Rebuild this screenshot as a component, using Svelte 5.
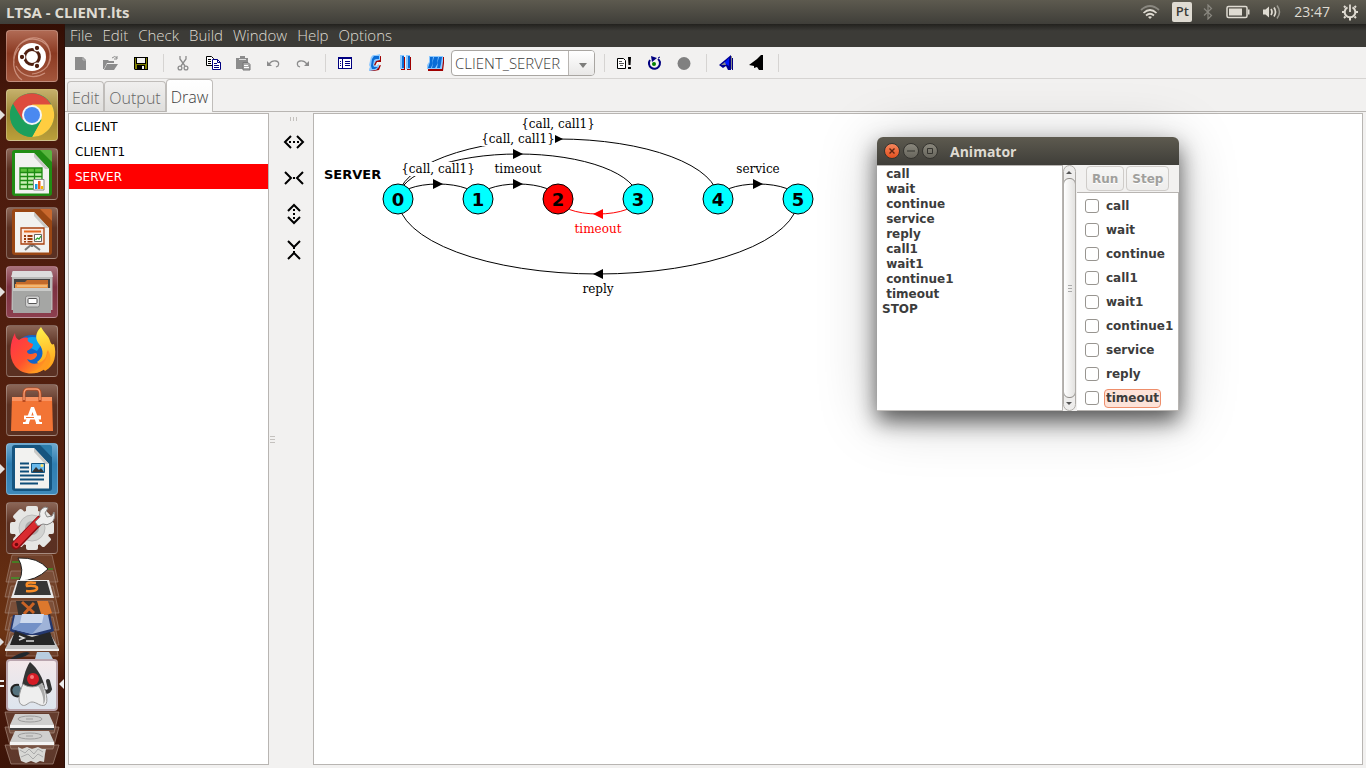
<script>
  const menus = ['File', 'Edit', 'Check', 'Build', 'Window', 'Help', 'Options'];
  const machines = ['CLIENT', 'CLIENT1', 'SERVER'];
  let selected = $state('SERVER');
  const actions = ['call', 'wait', 'continue', 'call1', 'wait1', 'continue1', 'service', 'reply', 'timeout'];
  const trace = ' call\n wait\n continue\n service\n reply\n call1\n wait1\n continue1\n timeout\nSTOP';

  const AXIS = 199;
  const nodes = [0, 1, 2, 3, 4, 5].map((n) => ({ n, x: 398 + n * 80, error: n === 2 }));
  const edges = [
    { from: 0, to: 1, label: '{call, call1}', w: 76 },
    { from: 0, to: 3, label: '{call, call1}', w: 76 },
    { from: 0, to: 4, label: '{call, call1}', w: 76 },
    { from: 1, to: 2, label: 'timeout', w: 50 },
    { from: 3, to: 2, label: 'timeout', w: 50, color: '#f00' },
    { from: 4, to: 5, label: 'service', w: 46 },
    { from: 5, to: 0, label: 'reply', w: 34 }
  ].map((e) => {
    const a = 398 + e.from * 80;
    const b = 398 + e.to * 80;
    const rx = Math.abs(b - a) / 2;
    const ry = rx * 3 / 8;
    const dir = b > a ? 1 : -1;
    const cx = (a + b) / 2;
    const apex = AXIS - dir * ry;
    return {
      ...e, cx, color: e.color ?? '#000',
      path: `M${a} ${AXIS}A${rx} ${ry} 0 0 1 ${b} ${AXIS}`,
      head: `M${cx - dir * 5} ${apex - 5}L${cx + dir * 5} ${apex}L${cx - dir * 5} ${apex + 5}Z`,
      base: dir > 0 ? apex - 11 : apex + 19
    };
  });
</script>

{#snippet tile(name, bg, art, running = false)}
  <button class="tile {bg}" aria-label={name}>
    {#if running}<i class="pip"></i>{/if}
    <svg width="50" height="50" viewBox="0 0 50 50" aria-hidden="true">{@render art()}</svg>
  </button>
{/snippet}

{#snippet dash()}
  <g fill="none" stroke="#e9b9a8" stroke-width="1.2" opacity=".6">
    <path d="M7 32C5 17 17 5 30 7s16 18 10 29M12 14C24 3 40 9 43 21s-6 21-18 22M15 49C5 42 4 27 12 17M38 42c-11 7-24 3-29-7" />
  </g>
  <circle cx="25" cy="26" r="14" fill="#fff" />
  <circle cx="25" cy="26" r="7.4" fill="none" stroke="#4e1f10" stroke-width="3" />
  <g stroke="#fff" stroke-width="1.3" fill="#4e1f10">
    <circle cx="15" cy="26" r="2.8" /><circle cx="30" cy="17" r="2.8" /><circle cx="30" cy="35" r="2.8" />
  </g>
{/snippet}

{#snippet chrome()}
  <circle cx="25" cy="25" r="22" fill="#1fa463" />
  <path d="M25 25L6 14A22 22 0 0 1 44 14.500Z" fill="#dd4b3e" />
  <path d="M25 14.500H44.500A22 22 0 0 1 25 47L34.500 30Z" fill="#ffcd40" />
  <path d="M6 14L15.500 30L25 14.500Z" fill="#dd4b3e" />
  <path d="M6 14L16 31.500a11 11 0 0 0 18-1L25 47A22 22 0 0 1 6 14Z" fill="#1c9f5c" />
  <circle cx="25" cy="25" r="10" fill="#f5f5f5" /><circle cx="25" cy="25" r="8" fill="#4a89f0" />
{/snippet}

{#snippet sheet(c1, c2)}
  <path d="M8 1H34L45 13V44a3 3 0 0 1-3 3H8a3 3 0 0 1-3-3V4a3 3 0 0 1 3-3Z" fill={c1} />
  <path d="M33 1H43a2 2 0 0 1 2 2V13Z" fill={c2} />
  <path d="M8 4H27L42 20V44.500H8Z" fill="#f2f2f0" />
  <path d="M27 4L42 20H38L27 8Z" fill="#c9c9c6" />
{/snippet}

{#snippet calc()}
  {@render sheet('#218d14', '#58b53e')}
  <path d="M13 19H35V40H13Z" fill="#c9efb4" />
  <path d="M13 19H35V23H13Z" fill="#5cc13c" />
  <path d="M13 19H35V40H13ZM13 23.500H35M13 27.500H35M13 31.500H35M13 35.500H35M20.500 19V40M27.500 19V40" fill="none" stroke="#1c8a12" stroke-width="1.3" />
  <path d="M26.500 30.500H37V41H26.500Z" fill="#fff" stroke="#888" />
  <path d="M28 35h2.500v5H28Z" fill="#199be0" /><path d="M31 32h2.500v8H31Z" fill="#f0601c" /><path d="M34 37h2.200v3H34Z" fill="#f5b800" />
{/snippet}

{#snippet impress()}
  {@render sheet('#9a4714', '#c9682d')}
  <path d="M25 36L18 42M25 36L33 42M25 35v4" stroke="#777" stroke-width="2" />
  <path d="M14 20H37V36H14Z" fill="#fbe9df" stroke="#a8410f" stroke-width="1.300" />
  <path d="M17 22.500H34V24.500H17Z" fill="#e3681f" />
  <path d="M17 27h2v2h-2zM17 30h2v2h-2zM17 33h2v1.500h-2zM20.500 27h5v2h-5zM20.500 30h5v2h-5zM20.500 33h5v1.500h-5z" fill="#983a0c" />
  <path d="M27.500 26.500H34.500V33.500H27.500Z" fill="#fff" stroke="#666" /><path d="M28.500 32L30.500 30L32 31L34 28" fill="none" stroke="#31a431" stroke-width="1.300" />
{/snippet}

{#snippet files()}
  <path d="M5 5Q5 4 7 4H43Q45 4 45.500 7V43H4.500Z" fill="#b9bab8" />
  <path d="M6 4H44L46 10H4Z" fill="#ddd" />
  <path d="M7 12H43V21H7Z" fill="#444" />
  <path d="M9 15h9l2-2h21v8H9Z" fill="#c36a2a" /><path d="M8 17h33v4H8Z" fill="#e79446" /><path d="M10 19H40" stroke="#fbd9a2" />
  <path d="M6 21H44V46H6Z" fill="#a5a6a4" /><path d="M6 21H44V24H6Z" fill="#c9cac8" />
  <rect x="18.500" y="29" width="14" height="11" rx="2" fill="#d2d2d1" stroke="#888" />
  <rect x="21" y="31.500" width="9" height="5" rx="1" fill="#fff" stroke="#555" />
{/snippet}

{#snippet firefox()}
  <defs>
    <linearGradient id="foxBody" x1="0" y1="0" x2="1" y2="1"><stop offset="0" stop-color="#ff2f4e" /><stop offset=".5" stop-color="#ff512e" /><stop offset="1" stop-color="#ffbd1c" /></linearGradient>
    <linearGradient id="foxTail" x1=".4" y1="0" x2=".5" y2="1"><stop offset="0" stop-color="#fff14b" /><stop offset="1" stop-color="#ff9a16" /></linearGradient>
  </defs>
  <circle cx="25" cy="27" r="18" fill="#1265cb" /><path d="M13 17A17 17 0 0 1 37 15L30 25Z" fill="#0aa3ee" />
  <path d="M34 1C28 7 28 13 32 18c5 6 5 14-2 18l8 9c10-5 12-17 9-27-2 1-3 0-4-3-1-5-6-8-9-14Z" fill="url(#foxTail)" />
  <path d="M8 7c0 4 2 6 4 7 3-2 5-3 9-2-1 3 0 4 5 6 0 4-3 5-6 7 0 3 3 4 8 2 2 0 3 2 1 4-3 4-7 3-9 2 2 5 8 6 14 3 5-3 6-7 6-12 4 8 3 15-3 19-8 7-22 6-29-3C1 31 3 16 8 7Z" fill="url(#foxBody)" />
  <path d="M41 24c4 7 3 14-2 18-6 5-13 6-18 4 9 0 18-6 20-22Z" fill="#ff9a21" />
{/snippet}

{#snippet software()}
  <path d="M5 12H45L46 46H4Z" fill="#f27435" /><path d="M5 12H45V16H5Z" fill="#f89362" />
  <path d="M17 17V9q0-5 4-5h8q4 0 4 5v8" fill="none" stroke="#b84b20" stroke-width="3" /><path d="M17 15V9q0-5 4-5h8q4 0 4 5v6" fill="none" stroke="#f6a078" stroke-width="1.300" />
  <path d="M24 22h3L33 38H29L25.500 27L22 38H18Z" fill="#fff" /><path d="M17 30.500H34V34.500H17Z" fill="#fff" /><path d="M19 32H27V33H19Z" fill="#f27435" /><path d="M16 37H22V39H16ZM29 37H35V39H29Z" fill="#fff" />
{/snippet}

{#snippet writer()}
  {@render sheet('#15547f', '#2b7cab')}
  <path d="M13 19.500h9M13 23.500h9M13 27.500h9M13 31.500h24M13 35.500h24M13 39.500h18" stroke="#0e4d78" stroke-width="1.800" />
  <path d="M24.500 19.500H37.500V28.500H24.500Z" fill="#69b8ea" stroke="#135480" /><path d="M25 28l4-5 3 3 2-2 3 4Z" fill="#333" /><circle cx="35" cy="21.500" r="1.500" fill="#ffe064" />
{/snippet}

{#snippet settings()}
  <g fill="#e6e6e4">
    {#each [0, 45, 90, 135] as a}<rect x="19" y="3" width="12" height="44" rx="2" transform="rotate({a} 25 25)" />{/each}
    <circle cx="25" cy="25" r="18" />
  </g>
  <circle cx="25" cy="25" r="13" fill="#d2d3d1" stroke="#bbb" /><circle cx="25" cy="25" r="7" fill="#aaa" />
  <path d="M33 17L9 42" stroke="#8d0c11" stroke-width="9" stroke-linecap="round" /><path d="M32 17.500L9 41.500" stroke="#d92b30" stroke-width="6.500" stroke-linecap="round" />
  <circle cx="9.500" cy="41.500" r="1.800" fill="#6d0a0c" />
  <path d="M28 19L33 14Q31 7 38 4l3 1-3 5 2 4 5-1 2-4q2 7-3 11-4 3-8 1L31 23Z" fill="#eee" stroke="#888" stroke-width="1" />
{/snippet}

{#snippet duke()}
  <path d="M12 25c-6-1-9 3-7 8s10 4 12 0" fill="#55727e" stroke="#222" stroke-width="2" />
  <path d="M36 30q5 4 7-1l-2-8" fill="none" stroke="#333" stroke-width="4" stroke-linecap="round" />
  <path d="M23 2C18 9 16 20 14 31L38 28C36 18 31 9 23 2Z" fill="#333" />
  <path d="M16 24C12 33 10 43 15 45c4 2 6-3 10-3 5 0 8 5 13 3 4-3 1-14-3-22-5 5-14 5-19 1Z" fill="#eee" stroke="#999" />
  <path d="M31 26c5 7 6 14 5 18 4-2 2-12-1-20Z" fill="#aaa" />
  <circle cx="26" cy="19" r="6" fill="#d51b25" /><circle cx="25" cy="17" r="2" fill="#f47a7a" />
{/snippet}

{#snippet tool(name, art)}
  <button class="tool" aria-label={name}>
    <svg width="18" height="18" viewBox="0 0 18 18" aria-hidden="true">{@render art()}</svg>
  </button>
{/snippet}

{#snippet iNew()}<path d="M3 3H11L14 6V16H3Z" fill="#8c8c8c" /><path d="M11 3V6H14" fill="none" stroke="#bbb" />{/snippet}
{#snippet iOpen()}<path d="M1 6H6L7 7H12V9H5L2 15H1Z" fill="#8c8c8c" /><path d="M5 10H16L12 16H2Z" fill="#8c8c8c" /><path d="M10 4Q13 1 15 4M15 2V5H12" fill="none" stroke="#8c8c8c" />{/snippet}
{#snippet iSave()}<path d="M2 3H16V16H3L2 15Z" fill="#000" /><path d="M3 4H4V10H14V4H15V15H3Z" fill="#808000" /><path d="M5 4H13V9H5Z" fill="#f2f1f0" /><path d="M5 11H13V15H5Z" fill="#000" /><path d="M10 12H12V15H10Z" fill="#f2f1f0" />{/snippet}
{#snippet iCut()}<g fill="none" stroke="#8c8c8c" stroke-width="1.300"><path d="M6 2V5L11 12M12 2V5L7 12" /><circle cx="6" cy="14" r="1.900" /><circle cx="12" cy="14" r="1.900" /></g>{/snippet}
{#snippet iCopy()}<path d="M2.500 2.500H7.500L9.500 4.500V11.500H2.500Z" fill="#fff" stroke="#000" /><path d="M4 5.500h3M4 7.500h3M4 9.500h3" stroke="#000" /><path d="M8.500 5.500H13.500L16.500 8.500V15.500H8.500Z" fill="#fff" stroke="#000080" /><path d="M13.500 5.500V8.500H16.500M10 9.500h3M10 11.500h5M10 13.500h5" fill="none" stroke="#000080" />{/snippet}
{#snippet iPaste()}<path d="M2 4H6V2H11V4H14V8H9V15H2Z" fill="#8c8c8c" /><path d="M5 5.500H12" stroke="#ddd" /><path d="M9 8.500H14L16 10.500V16H9Z" fill="#aaa" stroke="#777" /><path d="M10 11.500h4M10 13.500h5" stroke="#fff" />{/snippet}
{#snippet iUndo()}<path d="M3 7V12H8Z" fill="#8c8c8c" /><path d="M5 10Q8 6 12 7T14 12L12 13" fill="none" stroke="#8c8c8c" stroke-width="1.300" />{/snippet}
{#snippet iRedo()}<path d="M15 7V12H10Z" fill="#8c8c8c" /><path d="M13 10Q10 6 6 7T4 12L6 13" fill="none" stroke="#8c8c8c" stroke-width="1.300" />{/snippet}
{#snippet iList()}<path d="M2 3H16V15H2Z" fill="#000080" /><path d="M3 5H6V14H3ZM7 5H15V14H7Z" fill="#fff" /><path d="M4 7.500h1M4 9.500h1M4 11.500h1M9 7.500h5M9 9.500h5M9 11.500h5" stroke="#000080" />{/snippet}
{#snippet iCompile()}
  <path d="M15 2V8H11L9 12H12L15 11L13 16L8 17H3L6 15L4 10L9 3Z" fill="#a00000" />
  <path d="M7 1H10L14 0V6L10 7L8 11L10 12L13 10V13L10 16L3 17V15L4 13L3 11L5 3Z" fill="#8cc8ff" />
  <path d="M8 2H13V5H10L8 6L7 11L8 13H12L9 15H6L5 12L6 5Z" fill="#0a6cd6" />
{/snippet}
{#snippet iCompose()}<path d="M7 3H9V16H5V15H7ZM13 3H15V16H11V15H13Z" fill="#a00000" /><path d="M4 1H8V15H4ZM10 1H14V15H10Z" fill="#8cc8ff" /><path d="M6 2H8V14H6ZM12 2H14V14H12Z" fill="#0a6cd6" />{/snippet}
{#snippet iMinimise()}
  <path d="M4 3H18V9L17 17H2V15H13Z" fill="#a00000" />
  <path d="M3 2H17V7L16 15H1V11L3 8Z" fill="#8cc8ff" />
  <path d="M4 3H7L6 10L8 3H12L11 10L13 3H16L15 10L14 14H11L12 9L9 14H6L7 9L5 14H2L4 8Z" fill="#0a6cd6" />
{/snippet}
{#snippet iCheck()}<path d="M2.500 4.500H8.500L10.500 6.500V14.500H2.500Z" fill="#fff" stroke="#000" /><path d="M4 7.500h3M4 9.500h5M5 11.500h3" stroke="#555" /><path d="M13 3H16L15.500 11H13.500ZM13 13H16V15H13Z" fill="#000" />{/snippet}
{#snippet iAnim()}<path d="M13 5A5.500 5.500 0 1 1 5 6" fill="none" stroke="#000080" stroke-width="2" /><path d="M6 2L12 4L7 8Z" fill="#000080" /><path d="M13 4l2-1M15 8h1" stroke="#000080" /><circle cx="9" cy="10" r="2" fill="#008000" />{/snippet}
{#snippet iStop()}<circle cx="9" cy="9.500" r="6.500" fill="#808080" />{/snippet}
{#snippet iBlueA()}<path d="M2 11L14 1V16H11L9 12L6 14Z" fill="#000090" /><path d="M7 9L12 4V12Z" fill="#0018ff" /><path d="M4 11L8 8L9 11ZM14 2h1v13h-1Z" fill="#888" /><path d="M15.500 4V16" stroke="#000080" />{/snippet}
{#snippet iBlackA()}<path d="M2 11L10 5L14 1H16V16H12L10 13L7 14V12Z" fill="#000" />{/snippet}

{#snippet chevrons(name, d, dots)}
  <button class="stretch" aria-label={name}>
    <svg width="22" height="22" viewBox="0 0 22 22" aria-hidden="true">
      <path {d} fill="none" stroke="#000" stroke-width="2" /><path d={dots} stroke="#000" stroke-width="2" />
    </svg>
  </button>
{/snippet}

<div class="desktop">
  <header class="panel">
    <h1>LTSA - CLIENT.lts</h1>
    <div class="tray">
      <svg class="wifi" width="20" height="16" viewBox="0 0 20 16" aria-label="Wi-Fi" fill="none" stroke-width="1.700">
        <path d="M1 6Q10-2 19 6" stroke="#8a8880" /><path d="M3.500 9Q10 3 16.500 9M6 11.500Q10 8 14 11.500" stroke="#dfdbd2" /><path d="M8 13L10 15L12 13Q10 11.500 8 13Z" fill="#dfdbd2" />
      </svg>
      <span class="kbd">Pt</span>
      <svg class="bt" width="10" height="16" viewBox="0 0 10 16" aria-label="Bluetooth"><path d="M1 4.500L8.500 11.500L5 15V1L8.500 4.500L1 11.500" fill="none" stroke="#8a8880" stroke-width="1.200" /></svg>
      <svg class="bat" width="24" height="14" viewBox="0 0 24 14" aria-label="Battery"><rect x="1" y="1.500" width="20" height="11" rx="1.500" fill="none" stroke="#dfdbd2" stroke-width="1.500" /><path d="M3 3.500H16V10.500H3Z" fill="#dfdbd2" /><path d="M22 4.500V9.500H23.500V4.500Z" fill="#dfdbd2" /></svg>
      <svg class="snd" width="20" height="16" viewBox="0 0 20 16" aria-label="Sound"><path d="M1 5.500H3.500L7 2.500V13.500L3.500 10.500H1Z" fill="#dfdbd2" /><path d="M9 5Q11 8 9 11M12 3.500Q15 8 12 12.500" fill="none" stroke="#dfdbd2" stroke-width="1.700" /><path d="M15 1.500Q20 8 15 14.500" fill="none" stroke="#9a988f" stroke-width="1.500" /></svg>
      <time>23:47</time>
      <svg width="18" height="18" viewBox="0 0 18 18" aria-label="Session"><g fill="none" stroke="#dfdbd2"><path d="M6.500 4.300A5.300 5.300 0 1 0 11.500 4.300" stroke-width="2" /><path d="M9 1.500V9" stroke-width="1.800" /><path d="M4.500 4.500L3 3M13.500 4.500L15 3M3.500 9H1M14.500 9H17M4.500 13.500L3 15M13.500 13.500L15 15M9 15V17.500" stroke-width="2" /></g></svg>
    </div>
  </header>

  <nav class="launcher" aria-label="Launcher">
    <div class="tiles">
      {@render tile('Dash', 'rust', dash)}
      {@render tile('Chrome', 'olive', chrome, true)}
      {@render tile('Calc', 'smoke', calc)}
      {@render tile('Impress', 'smoke', impress)}
      {@render tile('Files', 'wine', files, true)}
      {@render tile('Firefox', 'smoke', firefox)}
      {@render tile('Software', 'smoke', software)}
      {@render tile('Writer', 'blue', writer, true)}
      {@render tile('Settings', 'smoke', settings)}
    </div>
    <svg class="fold" width="64" height="105" viewBox="0 0 64 105" aria-hidden="true">
      <g fill="#8d6655" fill-opacity=".35" stroke="#a98a7b" stroke-opacity=".6">
        <path d="M12 1H52L58 28H6Z" /><path d="M11 17H53L59 43H5Z" /><path d="M11 32H53L59 59H5Z" /><path d="M11 47H53L59 76H5Z" /><path d="M11 63H53L59 91H5Z" /><path d="M10 78H54L58 102H6Z" />
      </g>
      <path d="M12 8h10M11 24h10M46 15h7" stroke="#20b820" /><path d="M18 4Q38 3 48 15Q36 27 19 27Q25 16 18 4Z" fill="#fff" stroke="#222" />
      <path d="M17 26H49L54 44H11Z" fill="#e9e9e9" /><path d="M18 27H47L51 41H14Z" fill="#363636" /><path d="M36 29Q25 27 27 32Q38 31 37 35Q35 38 26 37" fill="none" stroke="#f68b27" stroke-width="2.500" />
      <path d="M16 47H48L51 65H19Z" fill="#363230" /><path d="M37 47H48L52 59L42 63Z" fill="#dd782d" /><path d="M22 48L34 59M34 49L24 60" stroke="#ca6325" stroke-width="3" />
      <path d="M13 61H50L54 77L32 86L10 77Z" fill="#24386f" /><path d="M15 61H48L51 75L32 80L12 75Z" fill="#9fb3d8" /><path d="M22 60H44L42 69H20Z" fill="#cfdbee" /><path d="M20 69H42L32 80L12 75Z" fill="#7391c7" />
      <path d="M13 81H51L59 95H5Z" fill="#c5c5c5" /><path d="M15 77L32 83L50 78L55 91H10Z" fill="#262626" /><path d="M19 82l5 2-5 2M26 87h8" fill="none" stroke="#ddd" stroke-width="1.500" /><path d="M5 95H59V97H5Z" fill="#eee" />
      <path d="M0 84L4 88L0 92Z" fill="#ddd" />
      <path d="M27 98Q20 98 10 105Q23 105 30 99Z" fill="#20272c" /><path d="M37 98H49L53 105H35Z" fill="#b8cde0" />
    </svg>
    <div class="current">
      <button class="tile pale" aria-label="LTSA">
        <svg width="50" height="50" viewBox="0 0 50 50" aria-hidden="true">{@render duke()}</svg>
      </button>
      <svg class="marks" width="64" height="12" viewBox="0 0 64 12" aria-hidden="true"><path d="M0 3H4M0 8H4" stroke="#eee" stroke-width="2" /><path d="M64 1L59 6L64 11Z" fill="#eee" /></svg>
    </div>
    <svg class="fold" width="64" height="54" viewBox="0 0 64 54" aria-hidden="true">
      <g fill="#ac8d7d" fill-opacity=".3" stroke="#b59b8d" stroke-opacity=".6"><path d="M5 1H59L54 22H10Z" /><path d="M5 16H59L53 38H11Z" /><path d="M5 34H59L53 53H11Z" /></g>
      <g fill="#cfcfce"><path d="M15 3H49L54 14H10Z" /><path d="M15 20H49L54 31H10Z" /></g>
      <path d="M10 14H54V17H10ZM10 31H54V34H10Z" fill="#f4f4f4" /><path d="M10 17H54V19H10Z" fill="#444" />
      <g fill="none" stroke="#9d9d9d"><ellipse cx="30" cy="8" rx="12" ry="3" /><ellipse cx="30" cy="25" rx="12" ry="3" /><path d="M26 8h7M26 25h7" /></g>
      <path d="M18 36l4 2 5-2 5 2 6-2 4 2 4 0-1 5-1 8-4-1-4 2-5-2-5 2-5-2-2-7Z" fill="#d8d8d5" /><path d="M20 39l5 3 4-4 5 5 4-5 5 3M21 46l7-3 5 5 5-5 5 3" fill="none" stroke="#aaa" />
    </svg>
  </nav>

  <main class="app">
    <nav class="menubar" aria-label="Menu">
      {#each menus as m}<button>{m}</button>{/each}
    </nav>
    <div class="toolbar" role="toolbar" aria-label="Tools">
      {@render tool('New', iNew)}{@render tool('Open', iOpen)}{@render tool('Save', iSave)}
      <span class="sep"></span>
      {@render tool('Cut', iCut)}{@render tool('Copy', iCopy)}{@render tool('Paste', iPaste)}{@render tool('Undo', iUndo)}{@render tool('Redo', iRedo)}
      <span class="sep"></span>
      {@render tool('Parse', iList)}{@render tool('Compile', iCompile)}{@render tool('Compose', iCompose)}{@render tool('Minimise', iMinimise)}
      <div class="combo">
        <select aria-label="Target"><option>CLIENT_SERVER</option></select>
        <svg width="25" height="22" viewBox="0 0 25 22" aria-hidden="true"><path d="M10 11H18L14 16Z" fill="#7d7d7b" /></svg>
      </div>
      <span class="sep"></span>
      {@render tool('Check safety', iCheck)}{@render tool('Animate', iAnim)}{@render tool('Stop', iStop)}
      <span class="sep"></span>
      {@render tool('Blue alphabet', iBlueA)}{@render tool('Black alphabet', iBlackA)}
      <span class="sep"></span>
    </div>
    <div class="tabs" role="tablist">
      <button role="tab" aria-selected="false">Edit</button>
      <button role="tab" aria-selected="false">Output</button>
      <button role="tab" aria-selected="true" class="on">Draw</button>
    </div>
    <section class="work">
      <ul class="machines">
        {#each machines as m}
          <li><button class:on={selected === m} onclick={() => (selected = m)}>{m}</button></li>
        {/each}
      </ul>
      <div class="sash"><i></i></div>
      <div class="side">
        <span class="grip"></span>
        {@render chevrons('Stretch horizontally', 'M8 5L2 11L8 17M14 5L20 11L14 17', 'M6 11h2M10 11h2M14 11h2')}
        {@render chevrons('Shrink horizontally', 'M2 5L8 11L2 17M20 5L14 11L20 17', 'M10 11h2')}
        {@render chevrons('Stretch vertically', 'M5 8L11 2L17 8M5 14L11 20L17 14', 'M11 6v2M11 10v2M11 14v2')}
        {@render chevrons('Shrink vertically', 'M5 2L11 8L17 2M5 20L11 14L17 20', 'M11 8v2M11 12v2')}
      </div>
      <div class="canvas">
        <svg width="520" height="200" viewBox="314 114 520 200" role="img" aria-label="SERVER">
          {#each edges as e}
            <path d={e.path} fill="none" stroke={e.color} />
            <path d={e.head} fill={e.color} />
          {/each}
          {#each edges as e}
            <rect x={e.cx - e.w / 2} y={e.base - 11} width={e.w - 1} height="14" fill="#fff" />
            <text class="label" x={e.cx} y={e.base} fill={e.color}>{e.label}</text>
          {/each}
          {#each nodes as n}
            <circle cx={n.x} cy={AXIS} r="15" fill={n.error ? '#f00' : '#0ff'} stroke="#000" />
            <text class="num" x={n.x} y={AXIS + 7}>{n.n}</text>
          {/each}
          <text class="name" x="324" y="179">SERVER</text>
        </svg>
      </div>
    </section>
  </main>

  <section class="window" aria-label="Animator">
    <header>
      <button class="wb close" aria-label="Close"><svg width="8" height="8" viewBox="0 0 8 8"><path d="M1.500 1.500L6.500 6.500M6.500 1.500L1.500 6.500" stroke="#5b2412" stroke-width="1.400" /></svg></button>
      <button class="wb" aria-label="Minimise"><svg width="8" height="8" viewBox="0 0 8 8"><path d="M0 4H8" stroke="#35342f" /></svg></button>
      <button class="wb" aria-label="Maximise"><svg width="8" height="8" viewBox="0 0 8 8"><path d="M1.500 1.500H6.500V6.500H1.500Z" fill="none" stroke="#35342f" /></svg></button>
      <h2>Animator</h2>
    </header>
    <div class="content">
      <textarea readonly aria-label="Trace" value={trace}></textarea>
      <div class="scroll">
        <svg width="12" height="12" viewBox="0 0 12 12" aria-hidden="true"><path d="M3 8H9L6 5Z" fill="#555" /></svg>
        <div class="thumb"><i></i></div>
        <svg width="12" height="12" viewBox="0 0 12 12" aria-hidden="true"><path d="M3 4H9L6 7Z" fill="#555" /></svg>
      </div>
      <div class="controls">
        <div class="runbar"><button disabled>Run</button><button disabled>Step</button></div>
        <div class="checks">
          {#each actions as a}
            <label class:focus={a === 'timeout'}><input type="checkbox" /><span>{a}</span></label>
          {/each}
        </div>
      </div>
    </div>
  </section>
</div>

<style>
  :global(body) { overflow: hidden; }
  .desktop {
    position: relative;
    display: grid;
    grid-template: 24px minmax(0, 1fr) / 65px minmax(0, 1fr);
    height: 100vh;
    background: #f2f1f0;
    color: #3c3c3c;
    font-family: "Open Sans", "Noto Sans", sans-serif;
  }
  button { font: inherit; color: inherit; border: 0; padding: 0; margin: 0; background: none; }
  h1, h2 { margin: 0; font-size: 15px; font-weight: 700; color: #dfdbd2; }
  svg { display: block; }

  .panel {
    grid-column: 1 / -1;
    display: flex;
    justify-content: space-between;
    align-items: center;
    padding: 0 7px 0 6px;
    background: linear-gradient(#5d5a4f, #3f3e39);
    line-height: 24px;
  }
  .tray { display: flex; align-items: center; color: #dfdbd2; font-size: 15px; }
  .kbd {
    width: 20px; height: 20px; margin: 0 11px 0 12px;
    border-radius: 2px; background: #dfdbd2; color: #3c3b37;
    font-size: 13px; font-weight: 600; line-height: 19px; text-align: center;
  }
  .bat { margin: 0 12px 0 13px; }
  time { margin: 0 11px 0 12px; font-size: 14px; }

  .launcher {
    box-sizing: border-box;
    overflow: hidden;
    padding-top: 6px;
    border-right: 1px solid #2c1009;
    background: linear-gradient(#330e04, #4b1a0d 12%, #54210f 60%, #6b3313 82%, #4c1b0c 88%, #3c1408);
  }
  .tiles { display: flex; flex-direction: column; gap: 7px; padding-left: 6px; }
  .tile {
    position: relative;
    box-sizing: border-box;
    width: 52px; height: 52px;
    border: 1px solid rgba(255, 255, 255, .25);
    border-radius: 4px;
  }
  .rust { background: linear-gradient(#b06a54, #8b3a22 45%, #a3563c); }
  .olive { background: linear-gradient(#c5b06b, #9c8330 50%, #bba03a); }
  .smoke { background: linear-gradient(#8b6657, #5c3122 40%, #5a3022); }
  .wine { background: linear-gradient(#a8717a, #7c3040 40%, #8c3f4e); }
  .blue { background: linear-gradient(#6ea9cf, #2e7db1 40%, #3e89ba); }
  .pale { background: linear-gradient(#f3e8ea, #dde5ee); border: 2px solid #b9a5ae; }
  .pale svg { margin: -1px; }
  .pip {
    position: absolute; left: -7px; top: 20px;
    border: 5px solid transparent; border-left-color: #e4e0dd; border-right: 0;
  }
  .current { position: relative; padding-left: 6px; height: 52px; }
  .marks { position: absolute; left: 0; top: 19px; }

  .app { display: flex; flex-direction: column; min-width: 0; font-weight: 300; }
  .menubar {
    display: flex; gap: 10px; height: 23px; padding-left: 5px;
    background: linear-gradient(#22211e, #3c3b37 7px);
    color: #dfdbd2; font-size: 15px;
  }
  .menubar button { height: 21px; line-height: 20px; }
  .toolbar {
    display: flex; align-items: center; height: 31px; padding-left: 1px;
    border-bottom: 1px solid #d6d4d2;
  }
  .tool { display: grid; place-items: center; width: 30px; height: 30px; }
  .sep { width: 1px; height: 18px; margin: 0 4px 0 7px; background: #d6d4d2; }
  .combo {
    display: flex; box-sizing: border-box; width: 144px; height: 26px; margin: 0 2px 0 1px;
    border: 1px solid #a9a6a2; border-radius: 4px; background: #fff;
  }
  .combo select {
    flex: 1; min-width: 0; padding: 0 0 0 3px; border: 0; appearance: none;
    background: none; color: #3c3c3c; font: 300 15px "Open Sans", sans-serif;
  }
  .combo svg { height: 24px; border-left: 1px solid #b8b5b2; border-radius: 0 3px 3px 0; background: linear-gradient(#fff, #e9e8e7); }

  .tabs { display: flex; align-items: flex-end; height: 32px; padding-left: 2px; border-bottom: 1px solid #b8b5b2; font-size: 16px; }
  .tabs button {
    box-sizing: border-box; height: 30px; padding: 3px 4px 0;
    border: 1px solid #c0bdba; border-bottom: 0; border-radius: 4px 4px 0 0;
    background: linear-gradient(#f0efee, #dfdedc); color: #666;
  }
  .tabs .on { height: 33px; margin-bottom: -1px; padding: 2px 4px 0; background: linear-gradient(#fff, #f8f8f7); color: #3c3c3c; }

  .work { display: flex; flex: 1; min-height: 0; margin: 1px 3px 3px; }
  .machines {
    box-sizing: border-box; width: 201px; margin: 0; padding: 0; list-style: none;
    border: 1px solid #b8b5b2; background: #fff;
  }
  .machines button {
    display: block; width: 100%; height: 25px; padding-left: 6px;
    color: #000; font: 12px "DejaVu Sans", sans-serif; text-align: left;
  }
  .machines .on { background: #f00; color: #fff; }
  .sash { display: flex; align-items: center; width: 6px; }
  .sash i { width: 5px; height: 7px; margin-left: 1px; background: repeating-linear-gradient(#c4c1be 0 1px, transparent 1px 3px); }
  .side { display: flex; flex-direction: column; align-items: center; gap: 14px; width: 38px; }
  .grip { width: 8px; height: 4px; margin: 4px 0 -4px; background: repeating-linear-gradient(90deg, #c4c1be 0 1px, transparent 1px 3px); }
  .canvas { flex: 1; min-width: 0; border: 1px solid #b8b5b2; background: #fff; overflow: hidden; }
  .label { font: 12px "DejaVu Serif", serif; text-anchor: middle; }
  .num { font: 700 18px "DejaVu Sans", sans-serif; text-anchor: middle; }
  .name { font: 700 13px "DejaVu Sans", sans-serif; }

  .window {
    position: absolute; left: 877px; top: 137px; width: 302px;
    display: flex; flex-direction: column;
    border-radius: 6px 6px 0 0; background: #f2f1f0;
    box-shadow: 0 10px 22px rgba(0, 0, 0, .62), 0 6px 60px rgba(0, 0, 0, .22);
    font: 700 12px "DejaVu Sans", sans-serif;
  }
  .window header {
    display: flex; align-items: center; gap: 3px; height: 28px; padding-left: 7px;
    border-radius: 6px 6px 0 0; background: linear-gradient(#5d5a4f, #3f3e39);
  }
  .window h2 { margin-left: 9px; font: 700 14px "Open Sans", sans-serif; }
  .wb {
    display: grid; place-items: center; box-sizing: border-box; width: 16px; height: 16px;
    border: 1px solid #35342f; border-radius: 50%; background: linear-gradient(#8a877c, #67655c);
  }
  .close { background: linear-gradient(#f5865c, #e2501f); }
  .content { display: flex; }
  textarea {
    box-sizing: border-box; width: 186px; padding: 1px 5px; resize: none; outline: 0; overflow: hidden;
    border: 1px solid #c4c1be; border-top-color: #b8b5b2; border-left: 0; border-right-color: #b8b5b2; background: #fff; color: #3c3c3c;
    font: inherit; line-height: 15px; white-space: pre;
  }
  .scroll {
    display: flex; flex-direction: column; box-sizing: border-box; width: 13px; margin: 0 1px 0 0;
    border: 1px solid #b0ada9; border-radius: 7px; background: #eeedec; overflow: hidden;
  }
  .scroll svg { margin-left: -1px; flex: none; }
  .thumb {
    display: flex; align-items: center; justify-content: center; flex: 1; margin: 0 -1px;
    border: 1px solid #908d89; border-radius: 6px; background: linear-gradient(90deg, #fff, #e3e2e0);
  }
  .thumb i { width: 4px; height: 7px; background: repeating-linear-gradient(#aaa 0 1px, transparent 1px 3px); }
  .controls { display: flex; flex: 1; min-width: 0; flex-direction: column; }
  .runbar { display: flex; gap: 2px; height: 27px; padding-left: 9px; align-items: center; }
  .runbar button {
    height: 25px; padding: 0 5px; border: 1px solid #cfccc9; border-radius: 4px;
    background: linear-gradient(#f6f6f5, #eeedec); color: #a09f9c; font-size: 12px; text-shadow: 0 1px #fff;
  }
  .checks { padding: 1px 0 0 8px; border: 1px solid #b8b5b2; border-width: 1px 1px 1px 0; background: #fff; }
  label { display: flex; align-items: center; gap: 5px; height: 24px; white-space: nowrap; }
  label input {
    appearance: none; box-sizing: border-box; flex: none; width: 14px; height: 14px; margin: 0;
    border: 1px solid #989590; border-radius: 3px; background: #fff;
  }
  label span { padding: 0 1px; border: 1px solid transparent; border-radius: 4px; line-height: 17px; }
  .focus span { border-color: #ee8e6b; background: #fde3d9; }
</style>
